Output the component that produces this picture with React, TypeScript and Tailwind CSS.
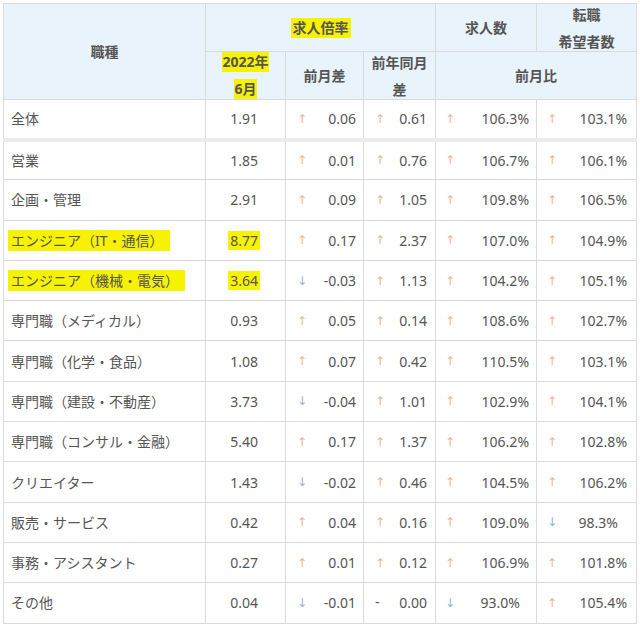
import React from "react";

type Dir = "up" | "down" | "flat";
type Chg = [Dir, string];
type Row = { name: string; hl?: boolean; rate: string; m: Chg; y: Chg; jobs: Chg; seek: Chg; jobsPad?: boolean; seekPad?: boolean };

const rows: Row[] = [
  { name: "全体", rate: "1.91", m: ["up", "0.06"], y: ["up", "0.61"], jobs: ["up", "106.3%"], seek: ["up", "103.1%"] },
  { name: "営業", rate: "1.85", m: ["up", "0.01"], y: ["up", "0.76"], jobs: ["up", "106.7%"], seek: ["up", "106.1%"] },
  { name: "企画・管理", rate: "2.91", m: ["up", "0.09"], y: ["up", "1.05"], jobs: ["up", "109.8%"], seek: ["up", "106.5%"] },
  { name: "エンジニア（IT・通信）", hl: true, rate: "8.77", m: ["up", "0.17"], y: ["up", "2.37"], jobs: ["up", "107.0%"], seek: ["up", "104.9%"] },
  { name: "エンジニア（機械・電気）", hl: true, rate: "3.64", m: ["down", "-0.03"], y: ["up", "1.13"], jobs: ["up", "104.2%"], seek: ["up", "105.1%"] },
  { name: "専門職（メディカル）", rate: "0.93", m: ["up", "0.05"], y: ["up", "0.14"], jobs: ["up", "108.6%"], seek: ["up", "102.7%"] },
  { name: "専門職（化学・食品）", rate: "1.08", m: ["up", "0.07"], y: ["up", "0.42"], jobs: ["up", "110.5%"], seek: ["up", "103.1%"] },
  { name: "専門職（建設・不動産）", rate: "3.73", m: ["down", "-0.04"], y: ["up", "1.01"], jobs: ["up", "102.9%"], seek: ["up", "104.1%"] },
  { name: "専門職（コンサル・金融）", rate: "5.40", m: ["up", "0.17"], y: ["up", "1.37"], jobs: ["up", "106.2%"], seek: ["up", "102.8%"] },
  { name: "クリエイター", rate: "1.43", m: ["down", "-0.02"], y: ["up", "0.46"], jobs: ["up", "104.5%"], seek: ["up", "106.2%"] },
  { name: "販売・サービス", rate: "0.42", m: ["up", "0.04"], y: ["up", "0.16"], jobs: ["up", "109.0%"], seek: ["down", "98.3%"], seekPad: true },
  { name: "事務・アシスタント", rate: "0.27", m: ["up", "0.01"], y: ["up", "0.12"], jobs: ["up", "106.9%"], seek: ["up", "101.8%"] },
  { name: "その他", rate: "0.04", m: ["down", "-0.01"], y: ["flat", "0.00"], jobs: ["down", "93.0%"], seek: ["up", "105.4%"], jobsPad: true },
];

function Arrow({ d }: { d: Dir }) {
  if (d === "flat") return <span className="text-[#555] font-['Liberation_Sans',sans-serif]">-</span>;
  return (
    <span className={d === "up" ? "text-[#f2b48a]" : "text-[#8fb4d4]"} style={{ fontFamily: "'DejaVu Sans', sans-serif", fontSize: 12 }}>
      {d === "up" ? "↑" : "↓"}
    </span>
  );
}

function ChgCell({ c, pl, pr, extra }: { c: Chg; pl: string; pr: string; extra?: boolean }) {
  return (
    <td className={`border border-[#dadada] ${pl} ${pr}`}>
      <div className="flex items-center justify-between">
        <Arrow d={c[0]} />
        <span className={extra ? "pr-[9px]" : ""}>{c[1]}</span>
      </div>
    </td>
  );
}

function H({ children }: { children: React.ReactNode }) {
  return <div className="h-[47px] flex flex-col items-center justify-center leading-[27px] overflow-visible whitespace-nowrap">{children}</div>;
}

const hl = "bg-[#f6f200]";
const th = "border border-[#dadada] font-bold p-0";

export default function App() {
  return (
    <div className="bg-white w-[640px] h-[631px] pt-[3px] pl-[3px]" style={{ fontFamily: "'Noto Sans', 'Noto Sans CJK JP', sans-serif" }}>
      <table className="table-fixed border-collapse w-[633px] text-[14px] text-[#555]">
        <colgroup>
          <col className="w-[202px]" />
          <col className="w-[80px]" />
          <col className="w-[78px]" />
          <col className="w-[72px]" />
          <col className="w-[101px]" />
          <col className="w-[100px]" />
        </colgroup>
        <thead className="bg-[#e8f3fb]">
          <tr>
            <th rowSpan={2} className={th}>職種</th>
            <th colSpan={3} className={th}>
              <H>
                <span className={`${hl} px-[2px] leading-[20px]`}>求人倍率</span>
              </H>
            </th>
            <th className={th}>
              <H>求人数</H>
            </th>
            <th className={th}>
              <H>
                <span>転職</span>
                <span>希望者数</span>
              </H>
            </th>
          </tr>
          <tr>
            <th className={th}>
              <H>
                <span className={`${hl} leading-[20px] my-[3.5px]`}>2022年</span>
                <span className={`${hl} leading-[20px] my-[3.5px]`}>6月</span>
              </H>
            </th>
            <th className={th}>
              <H>前月差</H>
            </th>
            <th className={th}>
              <H>
                <span>前年同月</span>
                <span>差</span>
              </H>
            </th>
            <th colSpan={2} className={th}>
              <H>前月比</H>
            </th>
          </tr>
        </thead>
        <tbody>
          {rows.map((r, i) => (
            <tr key={r.name} className={i === 0 ? "h-[40px] border-b-[4px] border-b-[#ececec]" : "h-[40.3px]"}>
              <td className="border border-[#dadada] pl-[7px] whitespace-nowrap">
                {r.hl ? <span className={`${hl} py-[1px] pr-[6px] -ml-[3px] pl-[3px]`}>{r.name}</span> : r.name}
              </td>
              <td className="border border-[#dadada] text-right pr-[27px]">
                {r.hl ? <span className={`${hl} px-[2px] -mr-[2px]`}>{r.rate}</span> : r.rate}
              </td>
              <ChgCell c={r.m} pl="pl-[11px]" pr="pr-[7px]" />
              <ChgCell c={r.y} pl="pl-[11px]" pr="pr-[8px]" />
              <ChgCell c={r.jobs} pl="pl-[9px]" pr="pr-[7px]" extra={r.jobsPad} />
              <ChgCell c={r.seek} pl="pl-[10px]" pr="pr-[9px]" extra={r.seekPad} />
            </tr>
          ))}
        </tbody>
      </table>
    </div>
  );
}
